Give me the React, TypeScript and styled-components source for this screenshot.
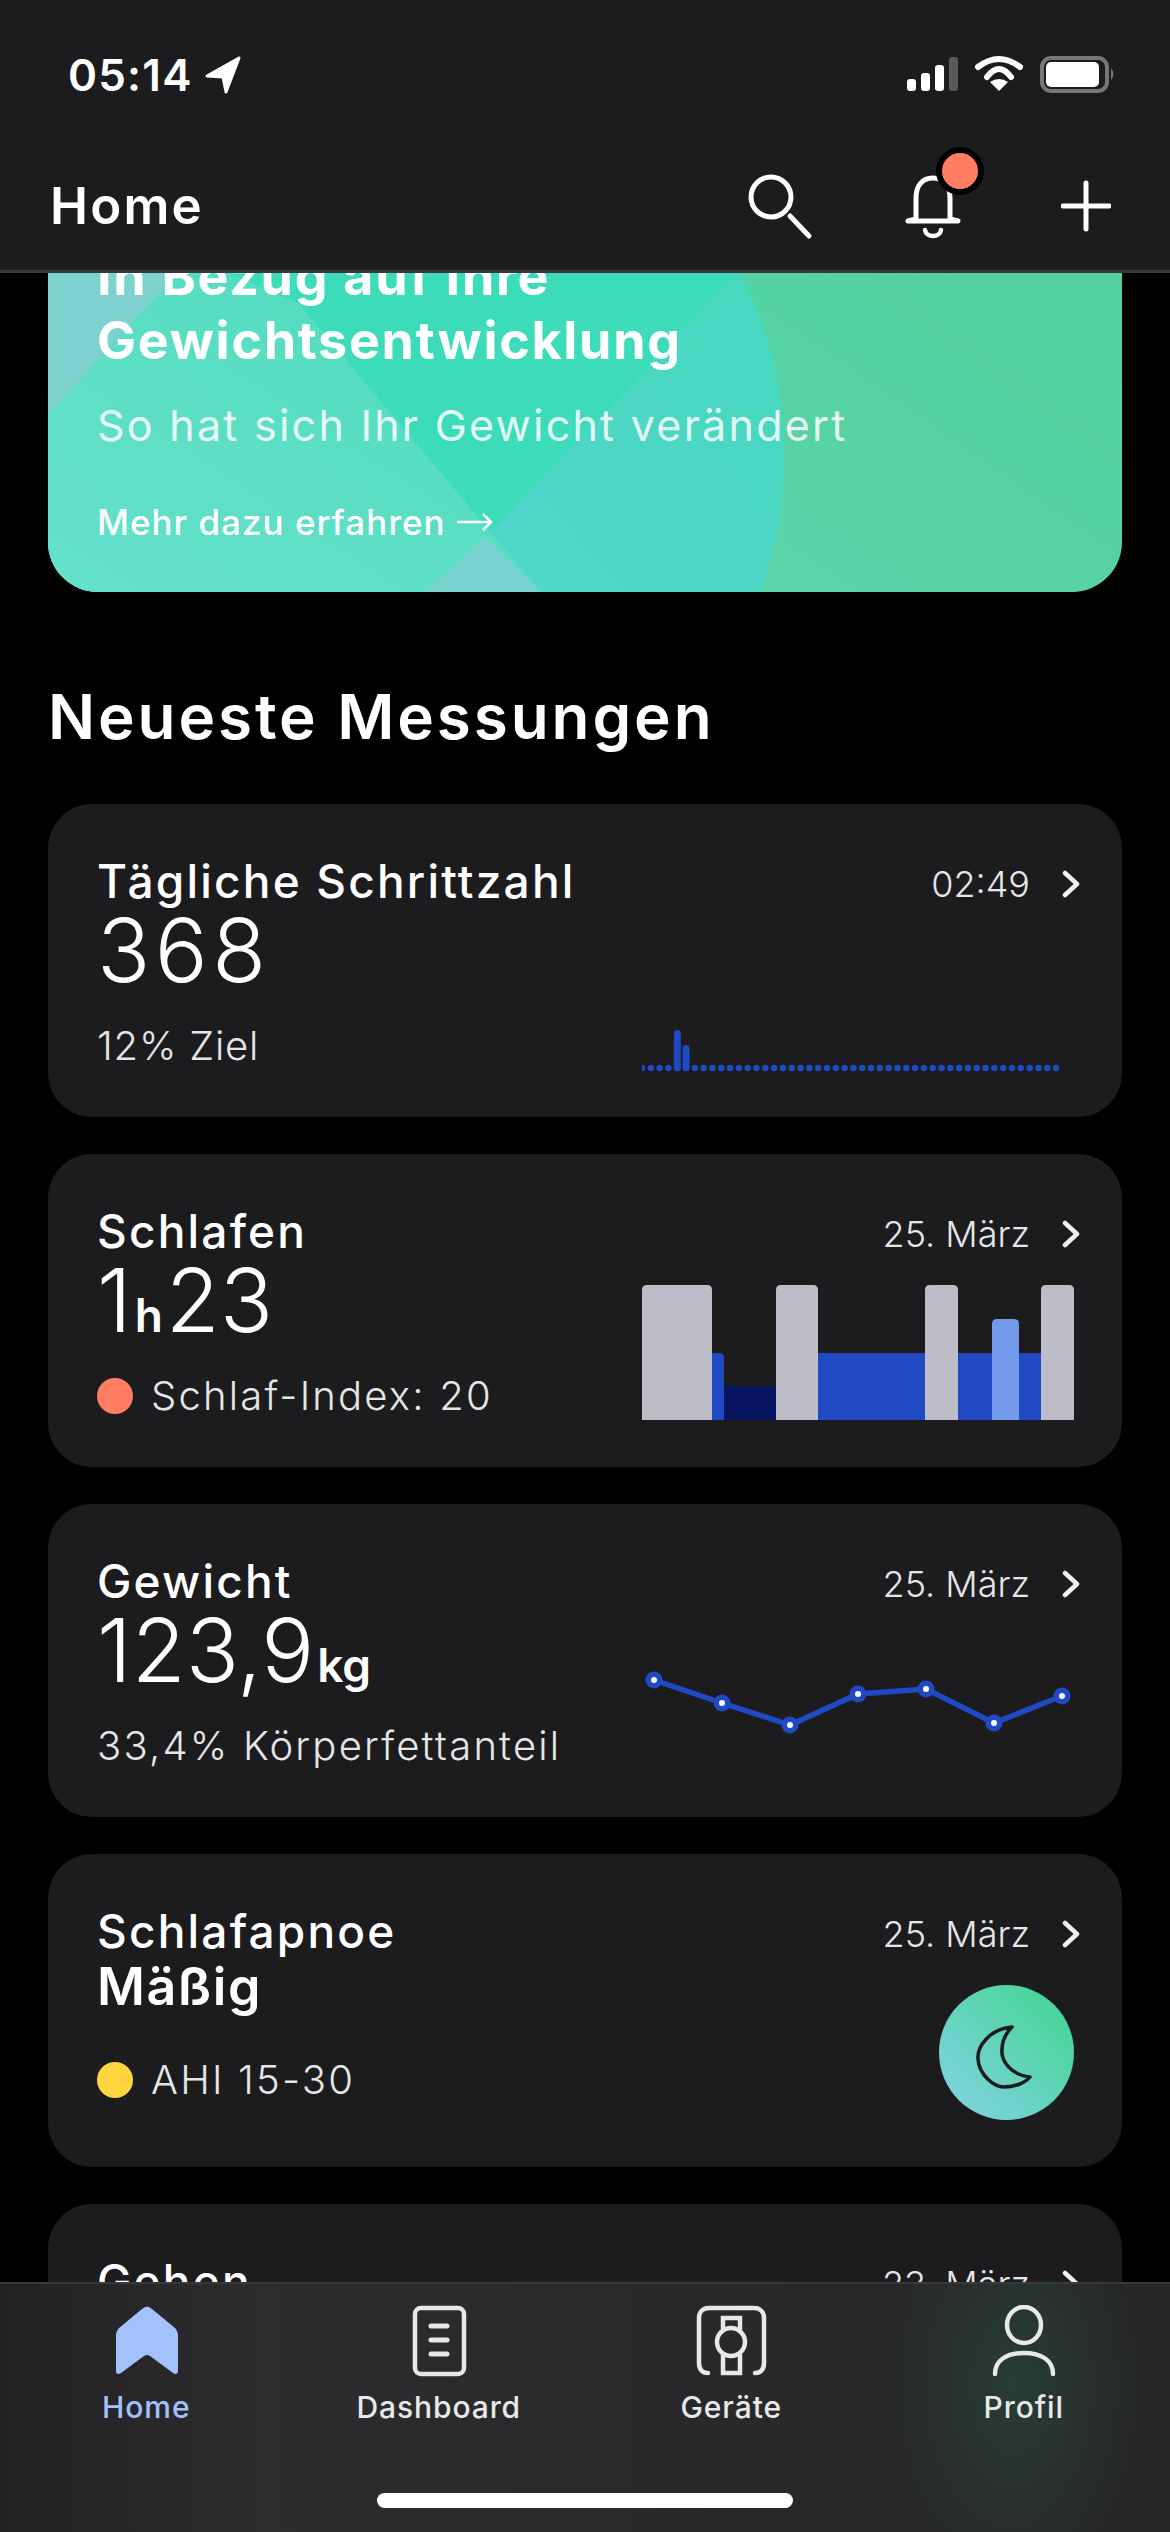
import React from "react";
import styled, { createGlobalStyle } from "styled-components";

const Global = createGlobalStyle`
  html, body { margin: 0; padding: 0; background: #000; }
  * { box-sizing: border-box; }
`;

const Page = styled.div`
  width: 1170px;
  height: 2532px;
  display: flex;
  flex-direction: column;
  overflow: hidden;
  background: #000;
  color: #fff;
  font-family: Inter, "Noto Sans", sans-serif;
`;

const Header = styled.header`
  flex: none;
  height: 273px;
  background: #1c1c1e;
  border-bottom: 3px solid #38383c;
`;

const StatusRow = styled.div`
  height: 145px;
  padding: 49px 50px 0 68px;
  display: flex;
  justify-content: space-between;
  align-items: flex-start;
`;

const TimeGroup = styled.div`
  display: flex;
  align-items: flex-start;
  gap: 11px;
`;

const Time = styled.span`
  font-size: 44px;
  line-height: 52px;
  font-weight: 600;
  letter-spacing: 1.2px;
`;

const LocationIcon = styled.svg`
  margin-top: 7px;
`;

const StatusIcons = styled.svg`
  margin-top: -2px;
`;

const AppBar = styled.div`
  height: 100px;
  padding: 0 59px 0 50px;
  display: flex;
  justify-content: space-between;
`;

const PageTitle = styled.h1`
  margin: 31px 0 0;
  font-size: 51px;
  line-height: 60px;
  font-weight: 600;
  letter-spacing: 2.2px;
`;

const Actions = styled.div`
  display: flex;
  gap: 77px;
`;

const Content = styled.main`
  flex: 1;
  min-height: 0;
  overflow: hidden;
  padding: 0 48px;
`;

const Banner = styled.section`
  position: relative;
  height: 378px;
  margin-top: -59px;
  padding: 31px 49px 0;
  border-radius: 50px;
  overflow: hidden;
  background: linear-gradient(215deg, #51d19a 0%, #5ad3aa 60%, #68d4bc 100%);
`;

const BannerArt = styled.svg`
  position: absolute;
  left: 0;
  bottom: 0;
`;

const BannerInner = styled.div`
  position: relative;
`;

const BannerTitle = styled.h2`
  margin: 0;
  font-size: 52px;
  line-height: 64px;
  font-weight: 700;
  letter-spacing: 1.7px;
`;

const BannerSub = styled.p`
  margin: 26px 0 0;
  font-size: 43px;
  line-height: 52px;
  font-weight: 400;
  letter-spacing: 2.25px;
  color: rgba(255, 255, 255, 0.86);
`;

const BannerLink = styled.p`
  margin: 50px 0 0;
  display: flex;
  align-items: center;
  gap: 11px;
  font-size: 35px;
  line-height: 42px;
  font-weight: 500;
  letter-spacing: 1px;
`;

const SectionTitle = styled.h2`
  margin: 89px 0 0;
  height: 123px;
  font-size: 62px;
  line-height: 72px;
  font-weight: 600;
  letter-spacing: 2.9px;
`;

const Card = styled.article`
  height: 313px;
  margin-bottom: 37px;
  padding: 52px 42px 0 49px;
  background: #1c1c1e;
  border-radius: 44px;
`;

const CardHead = styled.div`
  display: flex;
  justify-content: space-between;
  align-items: flex-start;
`;

const CardTitle = styled.h3`
  margin: 0;
  font-size: 46px;
  line-height: 50px;
  font-weight: 500;
  letter-spacing: 2.2px;
`;

const Meta = styled.div`
  display: flex;
  align-items: center;
  gap: 32px;
  height: 50px;
  padding-top: 5px;
`;

const MetaText = styled.span`
  font-size: 36px;
  line-height: 44px;
  font-weight: 300;
  color: #e6e6e8;
`;

const CardBody = styled.div`
  display: flex;
  justify-content: space-between;
  align-items: flex-start;
`;

const CardLeft = styled.div`
  display: flex;
  flex-direction: column;
`;

const Value = styled.div<{ $spacing?: number }>`
  font-size: 88px;
  line-height: 88px;
  font-weight: 300;
  letter-spacing: ${(p) => p.$spacing ?? 0}px;
  white-space: nowrap;
`;

const Unit = styled.span`
  font-size: 46px;
  line-height: 0;
  font-weight: 600;
  margin: 0 3px;
`;

const Status = styled.div`
  font-size: 52px;
  line-height: 56px;
  font-weight: 600;
  letter-spacing: 1.5px;
  margin: 3px 0 13px;
`;

const Sub = styled.div<{ $spacing?: number }>`
  margin-top: 28px;
  display: flex;
  align-items: center;
  gap: 18px;
  font-size: 40px;
  line-height: 48px;
  font-weight: 300;
  letter-spacing: ${(p) => p.$spacing ?? 2.2}px;
  color: #e6e6e8;
  white-space: nowrap;
`;

const Dot = styled.span<{ $color: string }>`
  width: 36px;
  height: 36px;
  border-radius: 50%;
  background: ${(p) => p.$color};
`;

const ChartSvg = styled.svg<{ $top: number }>`
  display: block;
  flex: none;
  margin-top: ${(p) => p.$top}px;
  margin-right: 6px;
`;

const MoonBadge = styled.div`
  width: 135px;
  height: 135px;
  margin: 29px 6px 0 0;
  border-radius: 50%;
  background: linear-gradient(45deg, #7cd3dc 12%, #47d596 88%);
`;

const TabBar = styled.nav`
  flex: none;
  height: 250px;
  display: flex;
  flex-direction: column;
  align-items: center;
  border-top: 2px solid #39393b;
  background:
    radial-gradient(ellipse 125px 210px at 1015px 100px, rgba(38, 92, 70, 0.42), rgba(38, 92, 70, 0) 100%),
    linear-gradient(90deg, #222224 0%, #2c2c2e 22%, #29292b 60%, #262628 100%);
`;

const Tabs = styled.div`
  width: 100%;
  display: grid;
  grid-template-columns: repeat(4, 1fr);
  padding-top: 21px;
`;

const Tab = styled.div<{ $active?: boolean }>`
  display: flex;
  flex-direction: column;
  align-items: center;
  gap: 12px;
  color: ${(p) => (p.$active ? "#a3c1fb" : "#e8e8ea")};
`;

const TabLabel = styled.span`
  font-size: 30px;
  line-height: 36px;
  font-weight: 500;
  letter-spacing: 0.9px;
`;

const HomeIndicator = styled.div`
  width: 416px;
  height: 15px;
  margin-top: 68px;
  border-radius: 8px;
  background: #fff;
`;

const Chevron = () => (
  <svg width="18" height="28" viewBox="0 0 18 28" fill="none">
    <path d="M3 3 L15 14 L3 25" stroke="#f0f0f2" strokeWidth="4.5" strokeLinecap="round" strokeLinejoin="round" />
  </svg>
);

const CardHeader = ({ title, date }: { title: string; date: string }) => (
  <CardHead>
    <CardTitle>{title}</CardTitle>
    <Meta>
      <MetaText>{date}</MetaText>
      <Chevron />
    </Meta>
  </CardHead>
);

const BLUE = "#204ac4";

const StepsChart = () => {
  const dots = Array.from({ length: 48 }, (_, i) => 642 + i * 8.81);
  return (
    <ChartSvg $top={120} width={432} height={50} viewBox="642 1025 432 50">
      {dots.map((x) => (
        <circle key={x} cx={x} cy={1067} r={3.2} fill={BLUE} />
      ))}
      <rect x={673.8} y={1029} width={7} height={41} rx={3.5} fill={BLUE} />
      <rect x={682.6} y={1044} width={7} height={26} rx={3.5} fill={BLUE} />
    </ChartSvg>
  );
};

const topRound = (x1: number, x2: number, top: number, bottom = 1420, r = 5) =>
  `M${x1} ${bottom}V${top + r}Q${x1} ${top} ${x1 + r} ${top}H${x2 - r}Q${x2} ${top} ${x2} ${top + r}V${bottom}Z`;

const SleepChart = () => (
  <ChartSvg $top={29} width={432} height={135} viewBox="642 1285 432 135">
    <path d={topRound(700, 724, 1353)} fill={BLUE} />
    <rect x={724} y={1386} width={52} height={34} fill="#06145f" />
    <rect x={810} y={1353} width={240} height={67} fill={BLUE} />
    <path d={topRound(992, 1019, 1319)} fill="#7299ea" />
    {[
      [642, 712],
      [776, 818],
      [925, 958],
      [1041, 1074],
    ].map(([a, b]) => (
      <path key={a} d={topRound(a, b, 1285)} fill="#bdbdc7" />
    ))}
  </ChartSvg>
);

const linePts: [number, number][] = [
  [654, 1680],
  [722, 1703],
  [790, 1725],
  [858, 1694],
  [926, 1689],
  [994, 1723],
  [1062, 1696],
];

const LineChart = () => (
  <ChartSvg $top={64} width={432} height={70} viewBox="642 1670 432 70">
    <polyline points={linePts.map((p) => p.join(",")).join(" ")} fill="none" stroke={BLUE} strokeWidth={5.5} />
    {linePts.map(([x, y]) => (
      <g key={x}>
        <circle cx={x} cy={y} r={8.5} fill={BLUE} />
        <circle cx={x} cy={y} r={3} fill="#fff" />
      </g>
    ))}
  </ChartSvg>
);

export default function App() {
  return (
    <Page>
      <Global />
      <Header>
        <StatusRow>
          <TimeGroup>
            <Time>05:14</Time>
            <LocationIcon width="38" height="38" viewBox="0 0 38 38">
              <path d="M35 2 L3 20 L19 21 L22 36 Z" fill="#fff" stroke="#fff" strokeWidth="3" strokeLinejoin="round" />
            </LocationIcon>
          </TimeGroup>
          <StatusIcons width="214" height="48" viewBox="906 47 214 48" fill="none">
            <rect x="907" y="79" width="9" height="12" rx="3" fill="#fff" />
            <rect x="921" y="73" width="9" height="18" rx="3" fill="#fff" />
            <rect x="935" y="65" width="9" height="26" rx="3" fill="#fff" />
            <rect x="949" y="57" width="9" height="34" rx="3" fill="#5a5a5c" />
            <path d="M978 67 Q999 51 1020 67" stroke="#fff" strokeWidth="6" strokeLinecap="round" />
            <path d="M987 77 Q999 61 1011 77" stroke="#fff" strokeWidth="6" strokeLinecap="round" />
            <path d="M999 91 L990 82 Q999 76 1008 82 Z" fill="#fff" />
            <rect x="1042" y="58" width="65" height="33" rx="9" stroke="#77777a" strokeWidth="4" />
            <rect x="1046" y="62" width="53" height="25" rx="5" fill="#fff" />
            <path d="M1111 68 Q1116 74 1111 80 Z" fill="#77777a" />
          </StatusIcons>
        </StatusRow>
        <AppBar>
          <PageTitle>Home</PageTitle>
          <Actions>
            <svg width="70" height="100" viewBox="745 145 70 100" fill="none" stroke="#fff" strokeWidth="5" strokeLinecap="round">
              <circle cx="771" cy="197" r="20" />
              <path d="M790 216 L809 236" />
            </svg>
            <svg width="92" height="100" viewBox="892 145 92 100" fill="none">
              <path
                d="M916 219 V198 C916 186 922 178 933 178 C944 178 950 186 950 198 V219 L958 221 H908 Z"
                stroke="#fff"
                strokeWidth="5"
                strokeLinejoin="round"
              />
              <path d="M925 230 C926 238 940 238 941 230" stroke="#fff" strokeWidth="4.5" strokeLinecap="round" />
              <circle cx="960" cy="171" r="21" fill="#ff7d63" stroke="#000" strokeWidth="6" />
            </svg>
            <svg width="50" height="100" viewBox="1061 145 50 100" fill="none" stroke="#fff" strokeWidth="5" strokeLinecap="round">
              <path d="M1086 183 V229 M1063 206 H1109" />
            </svg>
          </Actions>
        </AppBar>
      </Header>

      <Content>
        <Banner>
          <BannerArt width="1074" height="319" viewBox="0 0 1074 319">
            <defs>
              <linearGradient id="lg1" x1="0" y1="1" x2="1" y2="0">
                <stop offset="0" stopColor="#66e0cb" />
                <stop offset="1" stopColor="#4edcbc" />
              </linearGradient>
              <linearGradient id="lg2" x1="0" y1="1" x2="1" y2="0">
                <stop offset="0" stopColor="#50d6cb" />
                <stop offset="1" stopColor="#47d8bd" />
              </linearGradient>
            </defs>
            <circle cx="346" cy="180" r="390" fill="#3cdcbb" />
            <path d="M692 0 L437 264 L493 319 L713 319 A390 390 0 0 0 736 187 A390 390 0 0 0 692 0 Z" fill="url(#lg2)" />
            <path d="M130 0 H180 L250 30 L493 319 H0 V142 Z" fill="url(#lg1)" />
            <path d="M0 0 H130 L0 142 Z" fill="#7dd1cf" />
            <path d="M437 264 L377 319 H493 Z" fill="#78d3d0" />
          </BannerArt>
          <BannerInner>
            <BannerTitle>
              In Bezug auf Ihre
              <br />
              Gewichtsentwicklung
            </BannerTitle>
            <BannerSub>So hat sich Ihr Gewicht verändert</BannerSub>
            <BannerLink>
              Mehr dazu erfahren
              <svg width="36" height="20" viewBox="0 0 36 20" fill="none" stroke="#fff" strokeWidth="2.5">
                <path d="M0 10 H34 M26 2 L34 10 L26 18" />
              </svg>
            </BannerLink>
          </BannerInner>
        </Banner>

        <SectionTitle>Neueste Messungen</SectionTitle>

        <Card>
          <CardHeader title="Tägliche Schrittzahl" date="02:49" />
          <CardBody>
            <CardLeft>
              <Value $spacing={4.5}>368</Value>
              <Sub $spacing={0.8}>12% Ziel</Sub>
            </CardLeft>
            <StepsChart />
          </CardBody>
        </Card>

        <Card>
          <CardHeader title="Schlafen" date="25. März" />
          <CardBody>
            <CardLeft>
              <Value>
                1<Unit>h</Unit>23
              </Value>
              <Sub>
                <Dot $color="#ff7d63" />
                Schlaf-Index: 20
              </Sub>
            </CardLeft>
            <SleepChart />
          </CardBody>
        </Card>

        <Card>
          <CardHeader title="Gewicht" date="25. März" />
          <CardBody>
            <CardLeft>
              <Value>
                123,9<Unit>kg</Unit>
              </Value>
              <Sub>33,4% Körperfettanteil</Sub>
            </CardLeft>
            <LineChart />
          </CardBody>
        </Card>

        <Card>
          <CardHeader title="Schlafapnoe" date="25. März" />
          <CardBody>
            <CardLeft>
              <Status>Mäßig</Status>
              <Sub>
                <Dot $color="#ffd53f" />
                AHI 15-30
              </Sub>
            </CardLeft>
            <MoonBadge>
              <svg width="135" height="135" viewBox="0 0 135 135" fill="none">
                <path
                  d="M73 42 C50 44 38 62 39 74 C40 90 55 102 65 102 C76 102 86 98 91 92 C72 90 62 76 63 65 C63 55 67 48 73 42 Z"
                  stroke="#1c1c1e"
                  strokeWidth="3.5"
                  strokeLinejoin="round"
                />
              </svg>
            </MoonBadge>
          </CardBody>
        </Card>

        <Card>
          <CardHeader title="Gehen" date="23. März" />
        </Card>
      </Content>

      <TabBar>
        <Tabs>
          <Tab $active>
            <svg width="100" height="72" viewBox="96 2305 100 72">
              <path
                d="M142 2309 Q147 2304 152 2309 L175 2328 Q178 2331 178 2336 V2370 Q178 2376 173 2373 L150 2356 Q147 2354 144 2356 L121 2373 Q116 2376 116 2370 V2336 Q116 2331 119 2328 Z"
                fill="currentColor"
              />
            </svg>
            <TabLabel>Home</TabLabel>
          </Tab>
          <Tab>
            <svg width="100" height="72" viewBox="389 2305 100 72" fill="none" stroke="currentColor" strokeWidth="4.5" strokeLinecap="round">
              <rect x="415" y="2308" width="49" height="66" rx="6" />
              <path d="M431 2326 H447 M431 2340 H447 M431 2354 H447" strokeWidth="5" />
            </svg>
            <TabLabel>Dashboard</TabLabel>
          </Tab>
          <Tab>
            <svg width="100" height="72" viewBox="681 2305 100 72" fill="none" stroke="currentColor" strokeWidth="4.5" strokeLinecap="round">
              <path d="M708 2373 C702 2373 699 2369 699 2363 V2318 C699 2312 703 2308 709 2308 H754 C760 2308 764 2312 764 2318 V2363 C764 2369 761 2373 755 2373" />
              <circle cx="731" cy="2342" r="14" />
              <path d="M723 2329 V2318 H740 V2329 M723 2355 V2373 H740 V2355" />
            </svg>
            <TabLabel>Geräte</TabLabel>
          </Tab>
          <Tab>
            <svg width="100" height="72" viewBox="974 2305 100 72" fill="none" stroke="currentColor" strokeWidth="4.5" strokeLinecap="round">
              <ellipse cx="1024" cy="2325" rx="17" ry="18" />
              <path d="M995 2374 C995 2360 1007 2353 1024 2353 C1041 2353 1053 2360 1053 2374" />
            </svg>
            <TabLabel>Profil</TabLabel>
          </Tab>
        </Tabs>
        <HomeIndicator />
      </TabBar>
    </Page>
  );
}
